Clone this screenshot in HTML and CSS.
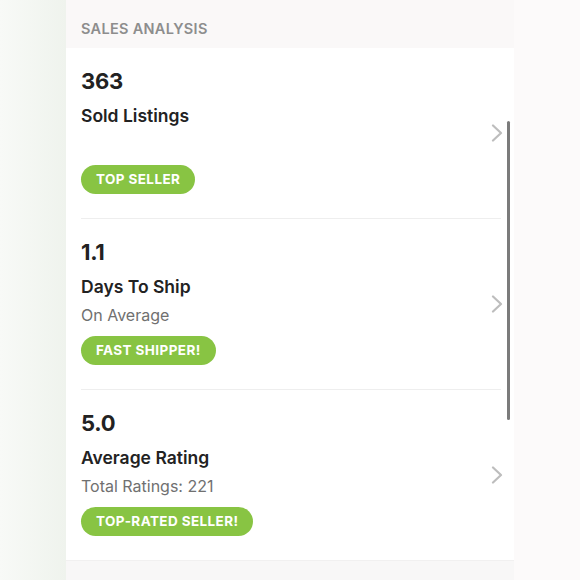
FILE: index.html
```html
<!DOCTYPE html>
<html lang="en">
<head>
<meta charset="utf-8">
<title>Sales Analysis</title>
<link rel="stylesheet" href="styles.css">
</head>
<body>
<div class="page">
  <div class="side side-left"></div>
  <main class="panel">
    <header class="panel-head">SALES ANALYSIS</header>
    <div class="card">
      <section class="stat">
        <div class="stat-body">
          <div class="stat-num">363</div>
          <div class="stat-title">Sold Listings</div>
          <div class="stat-sub"></div>
          <span class="badge">TOP SELLER</span>
        </div>
        <svg class="chev" width="12" height="18" viewBox="0 0 12 18"><polyline points="2,1.5 10,9 2,16.5" fill="none" stroke="#bdbdbd" stroke-width="2.2" stroke-linecap="round" stroke-linejoin="round"/></svg>
      </section>
      <section class="stat">
        <div class="stat-body">
          <div class="stat-num">1.1</div>
          <div class="stat-title">Days To Ship</div>
          <div class="stat-sub">On Average</div>
          <span class="badge">FAST SHIPPER!</span>
        </div>
        <svg class="chev" width="12" height="18" viewBox="0 0 12 18"><polyline points="2,1.5 10,9 2,16.5" fill="none" stroke="#bdbdbd" stroke-width="2.2" stroke-linecap="round" stroke-linejoin="round"/></svg>
      </section>
      <section class="stat last">
        <div class="stat-body">
          <div class="stat-num">5.0</div>
          <div class="stat-title">Average Rating</div>
          <div class="stat-sub">Total Ratings: 221</div>
          <span class="badge">TOP-RATED SELLER!</span>
        </div>
        <svg class="chev" width="12" height="18" viewBox="0 0 12 18"><polyline points="2,1.5 10,9 2,16.5" fill="none" stroke="#bdbdbd" stroke-width="2.2" stroke-linecap="round" stroke-linejoin="round"/></svg>
      </section>
      <div class="scrollbar"></div>
    </div>
    <div class="panel-foot"></div>
  </main>
  <div class="side side-right"></div>
</div>
</body>
</html>
```

FILE: styles.css
```css
* { box-sizing: border-box; }
html, body { margin: 0; padding: 0; }
body {
  font-family: "Inter", "Liberation Sans", sans-serif;
  color: #222;
  background: #fbf9f9;
}
.page {
  display: flex;
  width: 580px;
  height: 580px;
  overflow: hidden;
}
.side { flex: 0 0 66px; }
.side-left { background: linear-gradient(to right, #f8faf7, #eff3ed); }
.side-right { background: #fcfafa; }
.panel {
  flex: 0 0 448px;
  display: flex;
  flex-direction: column;
}
.panel-head {
  height: 48px;
  padding: 19px 15px 0;
  background: #faf8f8;
  font-size: 14.5px;
  line-height: 20px;
  font-weight: 600;
  color: #8d8d8d;
  letter-spacing: 0.3px;
}
.card {
  position: relative;
  background: #fff;
}
.stat {
  display: flex;
  align-items: center;
  margin: 0 13px 0 15px;
  padding: 19px 0 24px;
  border-bottom: 1px solid #eeeeee;
}
.stat.last { border-bottom: 0; }
.stat-body {
  flex: 1;
  display: flex;
  flex-direction: column;
  align-items: flex-start;
}
.stat-num {
  font-size: 22px;
  line-height: 28px;
  font-weight: 700;
  color: #222;
  margin-bottom: 7px;
  letter-spacing: -0.3px;
}
.stat-title {
  font-size: 17.5px;
  line-height: 28px;
  font-weight: 600;
  color: #222;
}
.stat-sub {
  height: 22px;
  margin-top: 3px;
  font-size: 16px;
  line-height: 22px;
  color: #707070;
}
.badge {
  margin-top: 10px;
  height: 29px;
  padding: 0 15px;
  border-radius: 15px;
  background: #88c443;
  color: #fff;
  font-size: 13.5px;
  line-height: 29px;
  font-weight: 700;
  letter-spacing: 0.4px;
}
.chev { flex: 0 0 12px; margin-right: -2px; margin-top: 5px; }
.scrollbar {
  position: absolute;
  left: 441px;
  top: 73px;
  width: 3px;
  height: 299px;
  border-radius: 2px;
  background: #7b7b7b;
}
.panel-foot {
  flex: 1;
  background: #f8f7f7;
  border-top: 1px solid #f1f0f0;
}
```
